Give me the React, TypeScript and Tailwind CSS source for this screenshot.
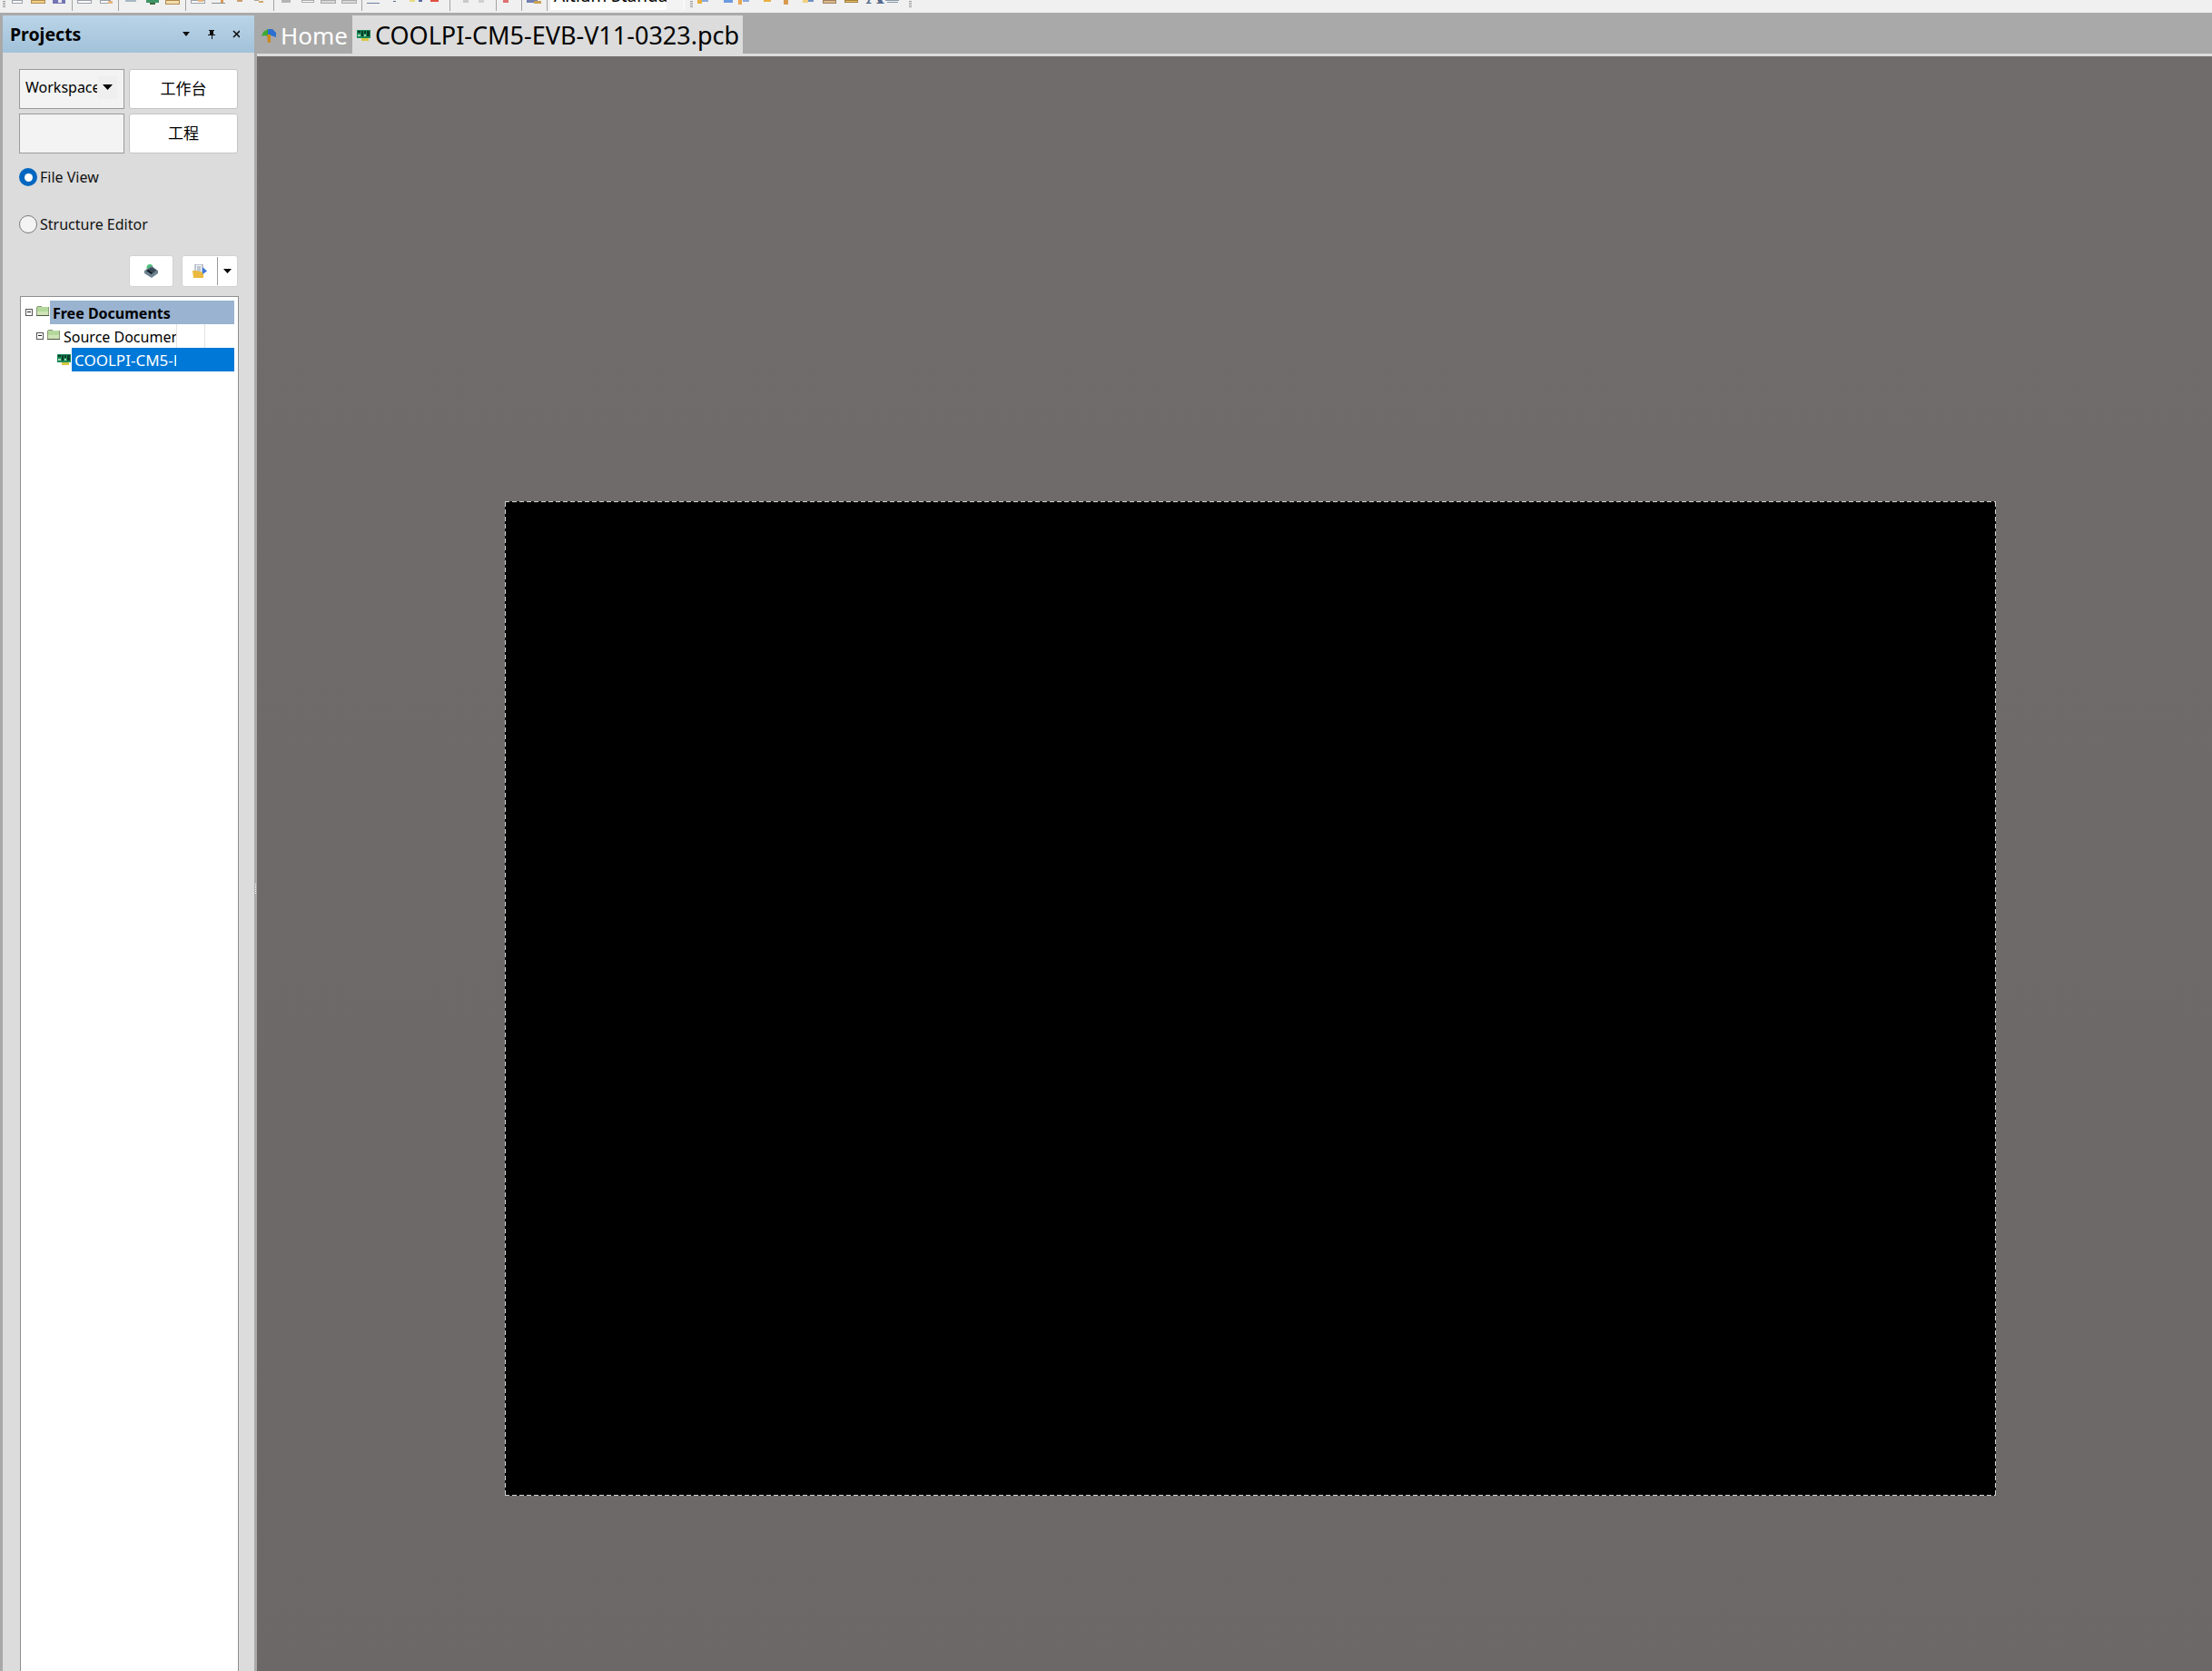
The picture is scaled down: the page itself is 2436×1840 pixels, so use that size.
import type { ReactNode } from "react";

const uiFont = "font-['Noto_Sans','Noto_Sans_CJK_SC',sans-serif]";

// toolbar icons are cut off by the top of the window, so only their lower pixels are drawn
function ToolGroup({ x, w, children }: { x: number; w: number; children: ReactNode }) {
  return (
    <svg width={w} height={14} viewBox={`${x} 0 ${w} 14`} className="shrink-0" shapeRendering="crispEdges">
      {children}
    </svg>
  );
}

function Sep() {
  return <div className="h-[12px] w-px shrink-0 bg-[#a3a3a3]" />;
}

function Grip({ x }: { x: number }) {
  return (
    <g fill="#9a9a9a">
      <rect x={x} y={1} width={3} height={1} />
      <rect x={x} y={3} width={3} height={1} />
      <rect x={x} y={5} width={3} height={1} />
      <rect x={x} y={7} width={3} height={1} />
    </g>
  );
}

function Toolbar() {
  return (
    <div className="flex h-[14px] shrink-0 items-start overflow-hidden bg-[#f0f0f0]">
      <ToolGroup x={0} w={79}>
        <Grip x={3} />
        <rect x={13} y={0} width={11} height={3} fill="#fff" stroke="#9aa0a8" />
        <rect x={34} y={0} width={15} height={3} fill="#f3cf85" stroke="#b08f50" />
        <rect x={58} y={0} width={14} height={4} fill="#7474b4" />
        <rect x={64} y={0} width={4} height={3} fill="#e8e8f0" />
      </ToolGroup>
      <Sep />
      <ToolGroup x={80} w={50}>
        <rect x={85} y={0} width={15} height={3} fill="#fff" stroke="#9aa0a8" />
        <rect x={110} y={0} width={11} height={3} fill="#fff" stroke="#9aa0a8" />
        <rect x={119} y={1} width={5} height={3} fill="#e6b47c" />
      </ToolGroup>
      <Sep />
      <ToolGroup x={131} w={73}>
        <rect x={138} y={0} width={12} height={2} fill="#a9b7c2" />
        <rect x={161} y={0} width={14} height={3} fill="#3f9466" />
        <rect x={165} y={3} width={6} height={2} fill="#3a6a3a" />
        <rect x={182} y={0} width={15} height={4} fill="#f3dcaa" stroke="#b08a50" />
      </ToolGroup>
      <Sep />
      <ToolGroup x={205} w={96}>
        <rect x={210} y={0} width={15} height={3} fill="#fff" stroke="#9aa0a8" />
        <rect x={218} y={0} width={6} height={2} fill="#e6b47c" />
        <rect x={233} y={3} width={15} height={1} fill="#8a8f98" />
        <rect x={243} y={0} width={3} height={3} fill="#d89a50" />
        <rect x={261} y={0} width={6} height={2} fill="#c9a070" />
        <rect x={280} y={0} width={5} height={1} fill="#b0a090" />
        <rect x={285} y={1} width={5} height={2} fill="#d0a868" />
      </ToolGroup>
      <Sep />
      <ToolGroup x={302} w={96}>
        <rect x={310} y={0} width={10} height={3} fill="#b4b4b4" />
        <rect x={332} y={0} width={13} height={2} fill="#fff" stroke="#aaa" />
        <rect x={353} y={0} width={16} height={3} fill="#d8d8d8" stroke="#aaa" />
        <rect x={376} y={0} width={16} height={3} fill="#d8d8d8" stroke="#aaa" />
      </ToolGroup>
      <Sep />
      <ToolGroup x={399} w={96}>
        <rect x={404} y={3} width={14} height={1} fill="#6f7fa0" />
        <rect x={433} y={1} width={3} height={1} fill="#5a6a8a" />
        <rect x={451} y={0} width={6} height={2} fill="#e8d880" />
        <rect x={461} y={0} width={4} height={2} fill="#5a6aa0" />
        <rect x={474} y={0} width={9} height={2} fill="#e05040" />
      </ToolGroup>
      <Sep />
      <ToolGroup x={496} w={50}>
        <rect x={510} y={0} width={6} height={3} fill="#c8c8c8" />
        <rect x={527} y={0} width={6} height={3} fill="#d0d0d0" />
      </ToolGroup>
      <Sep />
      <ToolGroup x={547} w={27}>
        <rect x={554} y={0} width={6} height={3} fill="#e07070" />
      </ToolGroup>
      <Sep />
      <ToolGroup x={575} w={27}>
        <rect x={580} y={0} width={12} height={3} fill="#7080b0" />
        <rect x={588} y={1} width={8} height={3} fill="#c8a050" />
      </ToolGroup>
      <Sep />
      <div className="ml-[3px] flex h-[11px] w-[148px] shrink-0 overflow-hidden bg-white">
        <span className={`-mt-[18px] block h-[30px] w-[128px] overflow-hidden whitespace-nowrap pl-[4px] text-[19px] leading-[26px] text-black ${uiFont}`}>
          Altium Standa
        </span>
        <div className="w-[19px] bg-[#f3f3f3]" />
      </div>
      <ToolGroup x={754} w={198}>
        <Grip x={760} />
        <rect x={768} y={0} width={5} height={4} fill="#e8b040" />
        <rect x={773} y={0} width={7} height={2} fill="#8aa8dc" />
        <rect x={797} y={0} width={10} height={3} fill="#6a9ae0" />
        <rect x={813} y={0} width={4} height={5} fill="#e8a850" />
        <rect x={818} y={0} width={7} height={2} fill="#8aa8dc" />
        <rect x={841} y={0} width={8} height={2} fill="#e8b040" />
        <rect x={863} y={0} width={5} height={5} fill="#d89a50" />
        <rect x={884} y={0} width={6} height={3} fill="#f0d080" />
        <rect x={890} y={0} width={6} height={2} fill="#7090c0" />
        <rect x={906} y={0} width={14} height={3} fill="#dcb88c" stroke="#a08060" />
        <rect x={930} y={0} width={14} height={2} fill="#e8c060" stroke="#a08040" />
      </ToolGroup>
      <span className="-mt-[19px] block h-[28px] w-[23px] shrink-0 text-center font-['Liberation_Serif',serif] text-[28px] font-bold leading-[28px] text-[#54698c]">A</span>
      <ToolGroup x={975} w={35}>
        <rect x={975} y={0} width={15} height={1} fill="#8898a8" />
        <rect x={977} y={2} width={12} height={1} fill="#8898a8" />
        <Grip x={1001} />
      </ToolGroup>
    </div>
  );
}

function Folder() {
  return (
    <svg width={14} height={12} viewBox="0 0 14 12" className="mb-[5px] shrink-0" shapeRendering="crispEdges">
      <path d="M1 1H6V2H14V12H0V2H1Z" fill="#8a9a78" />
      <rect x={1} y={2} width={12} height={9} fill="#b4d89c" />
      <rect x={1} y={7} width={12} height={4} fill="#cfe4b6" />
      <rect x={0} y={11} width={14} height={1} fill="#4c5642" />
    </svg>
  );
}

function PcbIcon() {
  return (
    <svg width={15} height={12} viewBox="0 0 15 12" className="shrink-0" shapeRendering="crispEdges">
      <rect x={0} y={0} width={15} height={9} fill="#1b8a58" />
      <rect x={1} y={1} width={3} height={2} fill="#0b3b28" />
      <rect x={5} y={1} width={2} height={6} fill="#0b3b28" />
      <rect x={8} y={1} width={2} height={3} fill="#0b3b28" />
      <rect x={11} y={1} width={3} height={6} fill="#0b3b28" />
      <rect x={1} y={5} width={3} height={2} fill="#9fd8b4" />
      <rect x={8} y={5} width={2} height={2} fill="#9fd8b4" />
      <rect x={5} y={9} width={8} height={3} fill="#d8c840" />
    </svg>
  );
}

function MinusBox() {
  return (
    <div className="mb-[1px] flex h-[8px] w-[8px] shrink-0 items-center justify-center border border-[#555] bg-white">
      <div className="h-px w-[4px] bg-[#222]" />
    </div>
  );
}

function Caret() {
  return (
    <svg width={11} height={6} viewBox="0 0 11 6">
      <path d="M0 0H11L5.5 6Z" fill="#000" />
    </svg>
  );
}

function Panel() {
  return (
    <div className="flex w-[280px] shrink-0 flex-col pl-[3px] pt-[3px]">
      <div className="flex h-[41px] shrink-0 items-center bg-gradient-to-b from-[#bad4e7] to-[#a2c2da] pl-[8px] pr-[16px]">
        <span className={`flex-1 pt-[1px] text-[19.5px] font-bold leading-none text-black ${uiFont}`}>Projects</span>
        <svg width={63} height={12} viewBox="0 0 63 12">
          <path d="M0 3H8L4 8Z" fill="#111" />
          <path d="M29 1H35V2H34V6H36V7H33V11H32V7H28V6H30V2H29Z" fill="#111" />
          <path d="M56 2L63 9M63 2L56 9" stroke="#111" strokeWidth={1.6} />
        </svg>
      </div>
      <div className={`flex min-h-0 flex-1 flex-col bg-[#dcdcdc] px-[18px] pt-[18px] ${uiFont}`}>
        <div className="grid grid-cols-[116px_120px] grid-rows-[44px_44px] gap-[5px]">
          <div className="flex items-center border border-[#9a9a9a] bg-[#f3f3f3] pb-[4px] pl-[6px] pr-[6px]">
            <span className="w-[79px] overflow-hidden whitespace-nowrap text-[16px] text-black">Workspace</span>
            <div className="flex h-[25px] w-[22px] items-center justify-center bg-[#efefef]">
              <Caret />
            </div>
          </div>
          <div className="flex items-center justify-center rounded-[3px] border border-[#c4c4c4] bg-white text-[17px] text-black">工作台</div>
          <div className="border border-[#9a9a9a] bg-[#f3f3f3]" />
          <div className="flex items-center justify-center rounded-[3px] border border-[#c4c4c4] bg-white text-[17px] text-black">工程</div>
        </div>
        <label className="mt-[16px] flex h-[20px] items-center gap-[3px] text-[16px] text-[#111]">
          <span className="flex h-[20px] w-[20px] items-center justify-center rounded-full bg-[#0067c0]">
            <span className="h-[9px] w-[9px] rounded-full bg-white" />
          </span>
          File View
        </label>
        <label className="mt-[32px] flex h-[20px] items-center gap-[3px] text-[16px] text-[#111]">
          <span className="h-[20px] w-[20px] rounded-full border-[1.5px] border-[#7a7a7a] bg-[#f3f3f3]" />
          Structure Editor
        </label>
        <div className="mt-[24px] flex h-[35px] justify-end gap-[9px]">
          <div className="flex w-[49px] items-center justify-center rounded-[3px] border border-[#d2d2d2] bg-white">
            <svg width={15} height={15} viewBox="0 0 15 15">
              <circle cx={6} cy={3.5} r={3.5} fill="#4fc07a" />
              <path d="M0 7L8 2L15 7V10L8 15L0 10Z" fill="#6f8290" />
              <path d="M2 7L8 3.5L13 7L7.5 11Z" fill="#14222e" />
              <path d="M5 5.5L10 9M7 4.5L12 8" stroke="#8fa3b2" strokeWidth={0.7} />
            </svg>
          </div>
          <div className="flex w-[62px] items-center rounded-[3px] border border-[#d2d2d2] bg-white">
            <div className="flex flex-1 items-center justify-center">
              <svg width={16} height={15} viewBox="0 0 16 15">
                <path d="M3 0H11V12H3Z" fill="#f2f4f8" stroke="#8c97a8" />
                <path d="M5 3H9M5 5H9M5 7H9" stroke="#8c97a8" />
                <path d="M0 7H4L12 9V15H1Z" fill="#eab93e" />
                <path d="M11 3L16 7.5L11 11Z" fill="#3c78d8" />
              </svg>
            </div>
            <div className="h-[31px] w-px bg-[#9a9a9a]" />
            <div className="flex w-[21px] items-center justify-center">
              <svg width={9} height={5} viewBox="0 0 9 5">
                <path d="M0 0H9L4.5 5Z" fill="#000" />
              </svg>
            </div>
          </div>
        </div>
        <div className="ml-[1px] mt-[10px] w-[241px] flex-1 border-x border-t border-[#8f8f8f] bg-white pr-[4px] pt-[4px] text-[16px]">
          <div className="flex h-[26px] items-center pl-[5px]">
            <MinusBox />
            <div className="ml-[4px]">
              <Folder />
            </div>
            <div className="ml-[1px] flex h-full flex-1 items-center bg-[#9ab3d0] pl-[3px] pt-[1px] font-bold text-black">Free Documents</div>
          </div>
          <div className="flex h-[26px] items-center pl-[17px]">
            <MinusBox />
            <div className="ml-[4px]">
              <Folder />
            </div>
            <div className="ml-[4px] w-[124px] overflow-hidden whitespace-nowrap pt-[1px] text-black">Source Documents</div>
            <div className="h-full w-[32px] border-x border-[#e3e3e3]" />
          </div>
          <div className="flex h-[26px] items-center pl-[40px]">
            <PcbIcon />
            <div className="ml-px flex h-full flex-1 items-center bg-[#0078d7] pl-[3px] pt-[1px] text-[17px] text-white">
              <span className="w-[112px] overflow-hidden whitespace-nowrap">COOLPI-CM5-EVB-V11-0323.pcb</span>
            </div>
          </div>
        </div>
      </div>
    </div>
  );
}

function Canvas() {
  return (
    <div className="flex-1 bg-gradient-to-b from-[#706c6b] to-[#6c6867] pl-[273px] pt-[490px]">
      <div className="flex h-[1095px] w-[1642px] flex-col">
        <div className="h-px bg-[repeating-linear-gradient(90deg,#cfcfcf_0_5px,#000_5px_8px)]" />
        <div className="flex flex-1">
          <div className="w-px bg-[repeating-linear-gradient(0deg,#cfcfcf_0_5px,#000_5px_8px)]" />
          <div className="flex-1 bg-black" />
          <div className="w-px bg-[repeating-linear-gradient(0deg,#cfcfcf_0_5px,#000_5px_8px)]" />
        </div>
        <div className="h-px bg-[repeating-linear-gradient(90deg,#cfcfcf_0_5px,#000_5px_8px)]" />
      </div>
    </div>
  );
}

export default function App() {
  return (
    <div className="flex h-[1840px] w-[2436px] flex-col overflow-hidden bg-[#a9a9a9]">
      <Toolbar />
      <div className="flex min-h-0 flex-1">
        <Panel />
        {/* splitter between the panel and the documents, its grip is a few white dots */}
        <div className="flex w-[3px] shrink-0 flex-col items-center gap-px pt-[959px]">
          <div className="h-px w-px bg-white" />
          <div className="h-px w-px bg-white" />
          <div className="h-px w-px bg-white" />
          <div className="h-px w-px bg-white" />
          <div className="h-px w-px bg-white" />
          <div className="h-px w-px bg-white" />
        </div>
        <div className={`flex min-w-0 flex-1 flex-col ${uiFont}`}>
          <div className="flex h-[45px] shrink-0 pt-[3px]">
            <div className="flex w-[105px] items-center gap-[5px] pl-[5px] pt-[2px] text-[26px] text-white">
              <svg width={16} height={16} viewBox="0 0 16 16" className="shrink-0">
                <path d="M0 9L2 4L7 1V9L3 8Z" fill="#3aa832" />
                <path d="M7 1H12L16 5V10L7 7Z" fill="#2a6fd0" />
                <path d="M6 7H10V16H7Z" fill="#c98a1e" />
              </svg>
              Home
            </div>
            <div className="flex w-[430px] items-center gap-[5px] whitespace-nowrap bg-[#dcdcdc] pl-[5px] pt-[2px] text-[27px] text-black">
              <PcbIcon />
              COOLPI-CM5-EVB-V11-0323.pcb
            </div>
          </div>
          <div className="h-[3px] shrink-0 bg-[#dcdcdc]" />
          <Canvas />
        </div>
      </div>
    </div>
  );
}
